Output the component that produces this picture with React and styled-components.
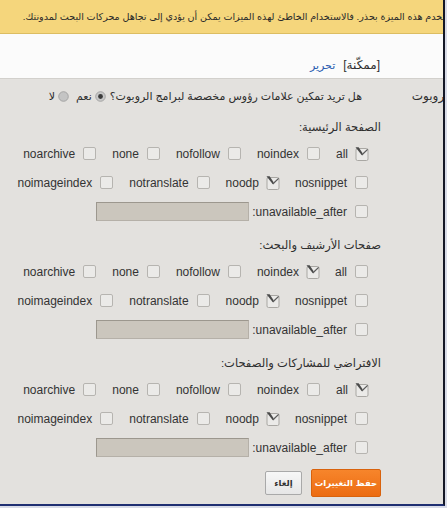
import React from 'react';
import styled, { createGlobalStyle } from 'styled-components';

const Global = createGlobalStyle`
  body {
    margin: 0;
    background: #d9dce8;
    font-family: "Liberation Sans", "DejaVu Sans", Arial, sans-serif;
  }
`;

const Frame = styled.div`
  width: 443px;
  height: 504px;
  border-right: 2px solid #151826;
  border-bottom: 2px solid #1f2f72;
  background: #e3e1de;
  overflow: hidden;
  direction: rtl;
  display: flex;
  flex-direction: column;
  color: #2e2e2e;
`;

const Banner = styled.div`
  height: 33px;
  flex: none;
  background: #f5d67c;
  border-bottom: 1px solid #dcbd62;
  display: flex;
  align-items: center;
  overflow: hidden;
  font-size: 9.6px;
  color: #2a2a2a;
  white-space: nowrap;
`;

const BannerText = styled.span`
  margin-right: -13px;
`;

const StatusBand = styled.div`
  height: 45px;
  flex: none;
  box-sizing: border-box;
  background: #fbfbfb;
  border-bottom: 1px solid #d2d0cc;
  padding: 23px 63px 0 0;
  display: flex;
  gap: 8px;
  font-size: 12px;
  line-height: 16px;
`;

const EditLink = styled.a`
  color: #2a5db0;
  text-decoration: none;
  font-size: 11px;
`;

const Body = styled.div`
  display: grid;
  grid-template-columns: 62px 1fr;
  padding-top: 8px;
`;

const SideLabel = styled.div`
  overflow: hidden;
  white-space: nowrap;
  font-size: 12px;
  line-height: 18px;
`;

const SideText = styled.span`
  display: inline-block;
  margin-right: -9px;
`;

const Content = styled.div`
  display: flex;
  flex-direction: column;
`;

const Question = styled.div`
  height: 18px;
  display: flex;
  align-items: center;
  gap: 4px;
  padding-right: 19px;
  font-size: 11px;
  margin-bottom: 10px;
`;

const Choice = styled.label`
  display: flex;
  align-items: center;
  gap: 3px;
  margin-left: 3px;
`;

const Section = styled.section`
  margin-bottom: 7px;
`;

const Heading = styled.div`
  height: 24px;
  line-height: 24px;
  font-size: 11.5px;
`;

const Row = styled.div`
  height: 29px;
  display: flex;
  align-items: center;
  gap: 16px;
  padding-right: 13px;
`;

const Item = styled.label`
  display: flex;
  align-items: center;
  gap: 8px;
  font-size: 12px;
  color: #333;
`;

const LabelText = styled.span`
  display: flex;
  align-items: center;
  gap: 3px;
`;

const DateField = styled.span`
  display: block;
  width: 153px;
  height: 19px;
  box-sizing: border-box;
  background: #cbc6bd;
  border: 1px solid #9c978e;
  border-right-color: #b5b0a8;
  border-bottom-color: #b5b0a8;
`;

const Buttons = styled.div`
  display: flex;
  align-items: center;
  gap: 9px;
  height: 28px;
`;

const Button = styled.button`
  font-family: "DejaVu Sans", sans-serif;
  font-weight: bold;
  white-space: nowrap;
  border-radius: 2px;
  cursor: pointer;
  padding: 0;
  height: ${(p) => (p.$primary ? '28px' : '24px')};
  width: ${(p) => (p.$primary ? '70px' : '37px')};
  font-size: 8.5px;
  color: ${(p) => (p.$primary ? '#fff' : '#333')};
  background: ${(p) => (p.$primary
    ? 'linear-gradient(#f7852b, #ec6c12)'
    : 'linear-gradient(#f7f7f7, #e6e6e6)')};
  border: 1px solid ${(p) => (p.$primary ? '#d8620d' : '#a9a9a9')};
`;

const Box = () => (
  <svg width="13" height="13" viewBox="0 0 13 13">
    <rect x="0.5" y="0.5" width="12" height="12" rx="1.5" fill="#ebeae8" stroke="#b6b4b0" />
  </svg>
);

const Checked = () => (
  <svg width="14" height="14" viewBox="0 0 14 14" style={{ margin: '0 -1px' }}>
    <rect x="1" y="1.5" width="12" height="12" rx="1.5" fill="#ebeae8" stroke="#a9a7a3" />
    <polygon points="0.5,0.3 3.6,0.3 7.6,6.2 6.8,8.2" fill="#4a4a4a" />
    <path d="M6.8 8 L12.6 2.4" stroke="#5a5a5a" strokeWidth="1.3" fill="none" />
  </svg>
);

const Radio = ({ on }) => (
  <svg width="11" height="11" viewBox="0 0 11 11">
    <circle cx="5.5" cy="5.5" r="4.8" fill={on ? '#c9c9c9' : '#c4c4c4'} stroke="#9a9a9a" strokeWidth="0.8" />
    {on && <circle cx="5.5" cy="5.5" r="2.4" fill="#3c3c3c" />}
  </svg>
);

const rowA = ['all', 'noindex', 'nofollow', 'none', 'noarchive'];
const rowB = ['nosnippet', 'noodp', 'notranslate', 'noimageindex'];

const sections = [
  { title: 'الصفحة الرئيسية:', checked: ['all', 'noodp'] },
  { title: 'صفحات الأرشيف والبحث:', checked: ['noindex', 'noodp'] },
  { title: 'الافتراضي للمشاركات والصفحات:', checked: ['all', 'noodp'] },
];

function Tag({ name, on }) {
  return (
    <Item>
      {on ? <Checked /> : <Box />}
      <span>{name}</span>
    </Item>
  );
}

export default function App() {
  return (
    <>
      <Global />
      <Frame>
        <Banner>
          <BannerText>
            استخدم هذه الميزة بحذر. فالاستخدام الخاطئ لهذه الميزات يمكن أن يؤدي إلى تجاهل محركات البحث لمدونتك.
          </BannerText>
        </Banner>
        <StatusBand>
          <span>[ممكّنة]</span>
          <EditLink href="#">تحرير</EditLink>
        </StatusBand>
        <Body>
          <SideLabel>
            <SideText>الروبوت</SideText>
          </SideLabel>
          <Content>
            <Question>
              <span>هل تريد تمكين علامات رؤوس مخصصة لبرامج الروبوت؟</span>
              <Choice><Radio on />نعم</Choice>
              <Choice><Radio />لا</Choice>
            </Question>
            {sections.map((s) => (
              <Section key={s.title}>
                <Heading>{s.title}</Heading>
                <Row>
                  {rowA.map((n) => <Tag key={n} name={n} on={s.checked.includes(n)} />)}
                </Row>
                <Row>
                  {rowB.map((n) => <Tag key={n} name={n} on={s.checked.includes(n)} />)}
                </Row>
                <Row>
                  <Item>
                    <Box />
                    <LabelText>
                      unavailable_after:
                      <DateField />
                    </LabelText>
                  </Item>
                </Row>
              </Section>
            ))}
            <Buttons>
              <Button $primary>حفظ التغييرات</Button>
              <Button>إلغاء</Button>
            </Buttons>
          </Content>
        </Body>
      </Frame>
    </>
  );
}
